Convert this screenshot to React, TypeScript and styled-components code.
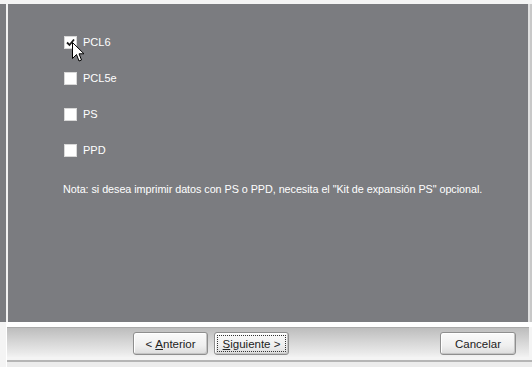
import React from "react";
import styled, { createGlobalStyle } from "styled-components";

const Global = createGlobalStyle`
  html, body { margin: 0; padding: 0; background: #ffffff; }
  body { width: 532px; height: 367px; overflow: hidden; font-family: "Liberation Sans", Arial, sans-serif; }
`;

const Frame = styled.div`
  width: 532px;
  height: 367px;
  display: flex;
  flex-direction: column;
  background: #f4f4f4;
  padding-top: 4px;
  box-sizing: border-box;
`;

const Body = styled.div`
  display: flex;
  height: 318px;
`;

const SideStrip = styled.div<{ $w: number; $c: string }>`
  width: ${(p) => p.$w}px;
  background: ${(p) => p.$c};
  flex: none;
`;

const Panel = styled.div`
  flex: 1;
  background: #7b7c80;
  padding: 32px 0 0 56px;
  box-sizing: border-box;
  color: #ffffff;
  font-size: 11px;
  position: relative;
`;

const OptionList = styled.div`
  display: flex;
  flex-direction: column;
  gap: 23px;
`;

const Option = styled.label`
  display: flex;
  align-items: center;
  gap: 6px;
  height: 13px;
  font-size: 11px;
  line-height: 13px;
`;

const Box = styled.span`
  width: 11px;
  height: 11px;
  background: #ffffff;
  border: 1px solid #d8d8d8;
  display: inline-flex;
  align-items: center;
  justify-content: center;
  flex: none;
`;

const Note = styled.p`
  margin: 26px 0 0 -1px;
  font-size: 10.8px;
  line-height: 13px;
  white-space: nowrap;
  letter-spacing: -0.05px;
`;

const Cursor = styled.svg`
  position: absolute;
  left: 64px;
  top: 38px;
`;

const Gap = styled.div`
  height: 5px;
  background: #ffffff;
  margin-left: 6px;
`;

const BarRow = styled.div`
  display: flex;
  height: 30px;
`;

const ButtonBar = styled.div`
  flex: 1;
  margin: 0 3px 0 0;
  background: linear-gradient(#bdbdbd 0%, #d2d2d2 40%, #e9e9e9 85%, #f2f2f2 100%);
  border-top: 1px solid #aaaaaa;
  display: flex;
  align-items: flex-start;
  padding: 4px 0 0 126px;
  box-sizing: border-box;
  gap: 6px;
`;

const Button = styled.button<{ $push?: boolean }>`
  width: ${(p) => (p.$push ? 76 : 75)}px;
  height: 23px;
  margin-left: ${(p) => (p.$push ? "auto" : "0")};
  margin-right: ${(p) => (p.$push ? "13px" : "0")};
  background: linear-gradient(#fafafa 0%, #efefef 60%, #dcdcdc 100%);
  border: 1px solid #8e8e8e;
  border-radius: 3px;
  font-family: "Liberation Sans", Arial, sans-serif;
  font-size: 11.5px;
  color: #222222;
  padding: 2px;
  display: flex;
  align-items: stretch;
  justify-content: stretch;
  box-shadow: inset -1px -1px 0 #c4c4c4, inset 1px 1px 0 #ffffff;
`;

const Face = styled.span<{ $focus?: boolean }>`
  flex: 1;
  display: flex;
  align-items: center;
  justify-content: center;
  white-space: pre;
  border: 1px dotted ${(p) => (p.$focus ? "#333333" : "transparent")};
`;

const Bottom = styled.div`
  height: 10px;
  margin-left: 6px;
  border-left: 1px solid #ffffff;
  background: linear-gradient(#f4f4f4 0 3px, #b5b5b5 3px 5px, #ececec 5px);
`;

const options = [
  { name: "PCL6", checked: true },
  { name: "PCL5e", checked: false },
  { name: "PS", checked: false },
  { name: "PPD", checked: false },
];

export default function App() {
  return (
    <>
      <Global />
      <Frame>
        <Body>
          <SideStrip $w={6} $c="#7b7c80" />
          <SideStrip $w={2} $c="#f2f2f2" />
          <Panel>
            <OptionList>
              {options.map((o) => (
                <Option key={o.name}>
                  <Box>
                    {o.checked && (
                      <svg width="9" height="9" viewBox="0 0 9 9">
                        <path d="M1 4.5 L3.5 7 L8 1.5" stroke="#1a1a1a" strokeWidth="1.8" fill="none" />
                      </svg>
                    )}
                  </Box>
                  {o.name}
                </Option>
              ))}
            </OptionList>
            <Note>
              Nota: si desea imprimir datos con PS o PPD, necesita el "Kit de expansión PS" opcional.
            </Note>
            <Cursor width="13" height="21" viewBox="0 0 13 21">
              <path
                d="M0.5 0.5 L0.5 16.5 L4.5 12.5 L7 19 L9.5 18 L7 11.8 L12 11.8 Z"
                fill="#ffffff"
                stroke="#000000"
                strokeWidth="1"
                strokeLinejoin="miter"
              />
            </Cursor>
          </Panel>
          <SideStrip $w={2} $c="#e0e0e0" />
          <SideStrip $w={2} $c="#c8c8c8" />
        </Body>
        <Gap />
        <BarRow>
          <SideStrip $w={6} $c="#f4f4f4" />
          <SideStrip $w={1} $c="#ffffff" />
          <ButtonBar>
            <Button>
              <Face>
                {"< "}<u>A</u>nterior
              </Face>
            </Button>
            <Button>
              <Face $focus>
                <u>S</u>{"iguiente >"}
              </Face>
            </Button>
            <Button $push>
              <Face>Cancelar</Face>
            </Button>
          </ButtonBar>
        </BarRow>
        <Bottom />
      </Frame>
    </>
  );
}
